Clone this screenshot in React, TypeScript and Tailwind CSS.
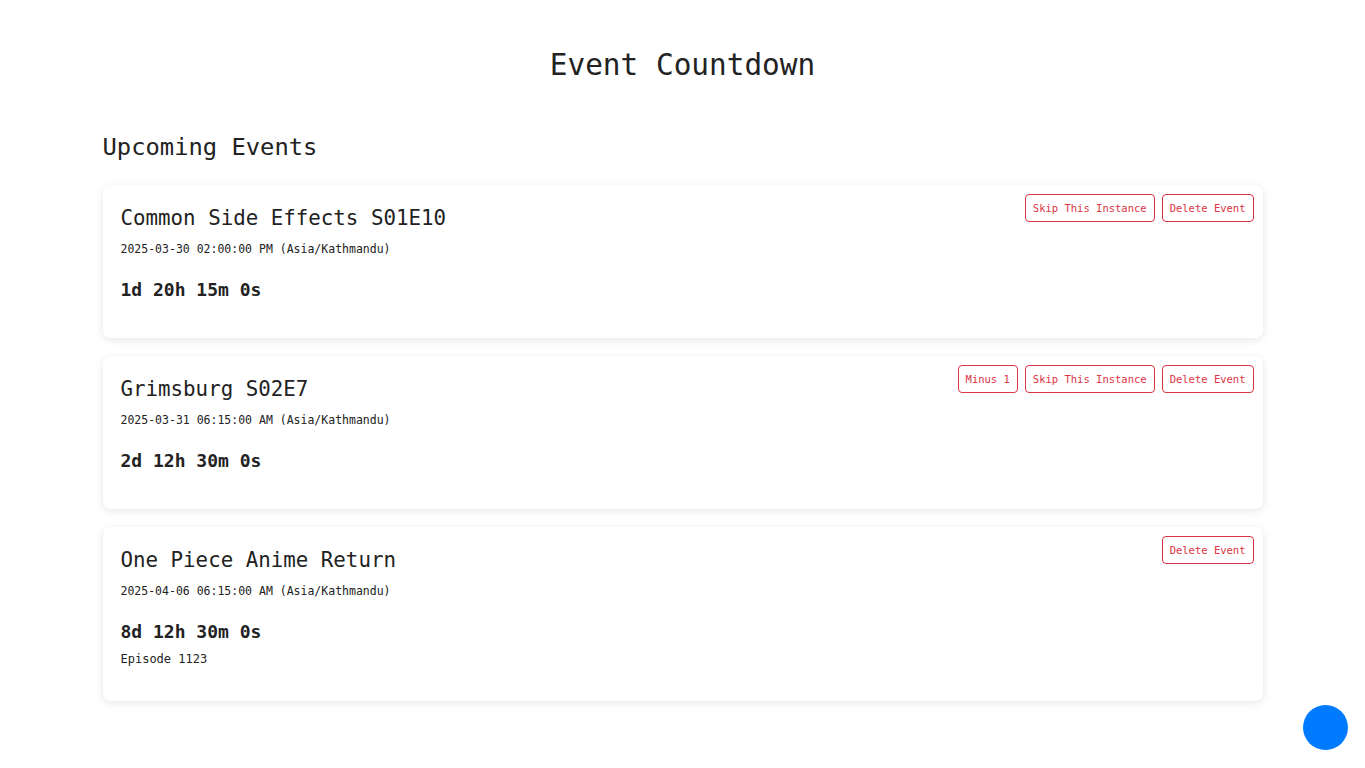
import React from "react";

interface EventItem {
  id: string;
  title: string;
  date: string;
  countdown: string;
  description?: string;
  actions: string[];
}

const events: EventItem[] = [
  {
    id: "cse",
    title: "Common Side Effects S01E10",
    date: "2025-03-30 02:00:00 PM (Asia/Kathmandu)",
    countdown: "1d 20h 15m 0s",
    actions: ["Skip This Instance", "Delete Event"]
  },
  {
    id: "grim",
    title: "Grimsburg S02E7",
    date: "2025-03-31 06:15:00 AM (Asia/Kathmandu)",
    countdown: "2d 12h 30m 0s",
    actions: ["Minus 1", "Skip This Instance", "Delete Event"]
  },
  {
    id: "op",
    title: "One Piece Anime Return",
    date: "2025-04-06 06:15:00 AM (Asia/Kathmandu)",
    countdown: "8d 12h 30m 0s",
    description: "Episode 1123",
    actions: ["Delete Event"]
  }
];

function EventCard({ event }: { event: EventItem }) {
  return (
    <div className="relative rounded-lg bg-white px-[18px] pt-[21px] pb-[20px] shadow-[0_2px_8px_rgba(0,0,0,0.1)]">
      <div className="absolute top-[9px] right-[9px] flex gap-[7px]">
        {event.actions.map((action) => (
          <button
            key={action}
            type="button"
            className="h-[28px] rounded-[4px] border border-[#dc3545] bg-white px-[7px] text-[10.5px] leading-none text-[#dc3545]"
          >
            {action}
          </button>
        ))}
      </div>
      <h3 className="text-[20.8px] leading-[24px] text-[#222]">{event.title}</h3>
      <p className="mt-[12px] text-[11.5px] leading-[14px] text-[#222]">{event.date}</p>
      <div className="mt-[23px] text-[18px] leading-[21px] font-bold text-[#222]">{event.countdown}</div>
      {event.description ? (
        <p className="mt-[10px] mb-[15px] text-[12px] leading-[14px] text-[#222]">{event.description}</p>
      ) : (
        <div className="h-[18px]" />
      )}
    </div>
  );
}

export default function App() {
  return (
    <main
      className="min-h-screen bg-white text-[#222]"
      style={{ fontFamily: '"DejaVu Sans Mono", "Liberation Mono", monospace' }}
    >
      <div className="mx-auto w-full max-w-[1160px] pt-[48px] pb-[68px]">
        <h1 className="text-center text-[29.4px] leading-[35px] text-[#222]">Event Countdown</h1>
        <h2 className="mt-[50px] text-[23.8px] leading-[28px] text-[#222]">Upcoming Events</h2>
        <div className="mt-[24px] flex flex-col gap-[18px]">
          {events.map((event) => (
            <EventCard key={event.id} event={event} />
          ))}
        </div>
      </div>
      <button
        type="button"
        aria-label="Add event"
        className="fixed right-[17px] bottom-[18px] h-[45px] w-[45px] rounded-full bg-[#007bff]"
      />
    </main>
  );
}
